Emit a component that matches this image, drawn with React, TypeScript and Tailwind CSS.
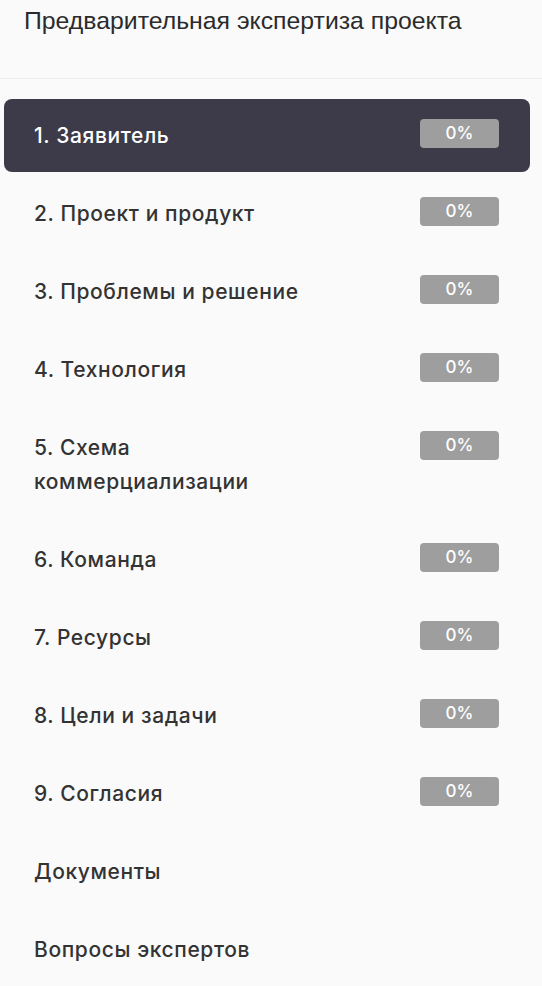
const items = [
  { label: '1. Заявитель', pct: '0%' },
  { label: '2. Проект и продукт', pct: '0%' },
  { label: '3. Проблемы и решение', pct: '0%' },
  { label: '4. Технология', pct: '0%' },
  { label: '5. Схема коммерциализации', pct: '0%' },
  { label: '6. Команда', pct: '0%' },
  { label: '7. Ресурсы', pct: '0%' },
  { label: '8. Цели и задачи', pct: '0%' },
  { label: '9. Согласия', pct: '0%' },
  { label: 'Документы' },
  { label: 'Вопросы экспертов' },
];

export default function App() {
  const active = 0;
  return (
    <div className="min-h-screen w-[542px] bg-[#fafafa]">
      <div className="h-[79px] border-b border-[#ededed] px-6 pt-[5px]">
        <h1 className="font-['Liberation_Sans',Arial,sans-serif] text-[24.8px] leading-[32px] text-[#2b2b2b]">
          Предварительная экспертиза проекта
        </h1>
      </div>
      <nav className="flex flex-col gap-[5px] pl-1 pr-3 pt-5">
        {items.map((item, i) => (
          <div
            key={item.label}
            className={
              'flex items-start justify-between rounded-lg pl-[30px] pr-[31px] pt-5 pb-[19px] ' +
              (i === active ? 'bg-[#3d3b49] text-white' : 'text-[#333333]')
            }
          >
            <span className="max-w-[270px] font-['Inter',sans-serif] text-[21px] font-medium leading-[34px] tracking-[0.6px]">
              {item.label}
            </span>
            {item.pct && (
              <span className="flex h-[29px] w-[79px] items-center justify-center rounded-[4px] bg-[#9e9e9e] font-['Inter',sans-serif] text-[17px] font-medium text-white">
                {item.pct}
              </span>
            )}
          </div>
        ))}
      </nav>
    </div>
  );
}
